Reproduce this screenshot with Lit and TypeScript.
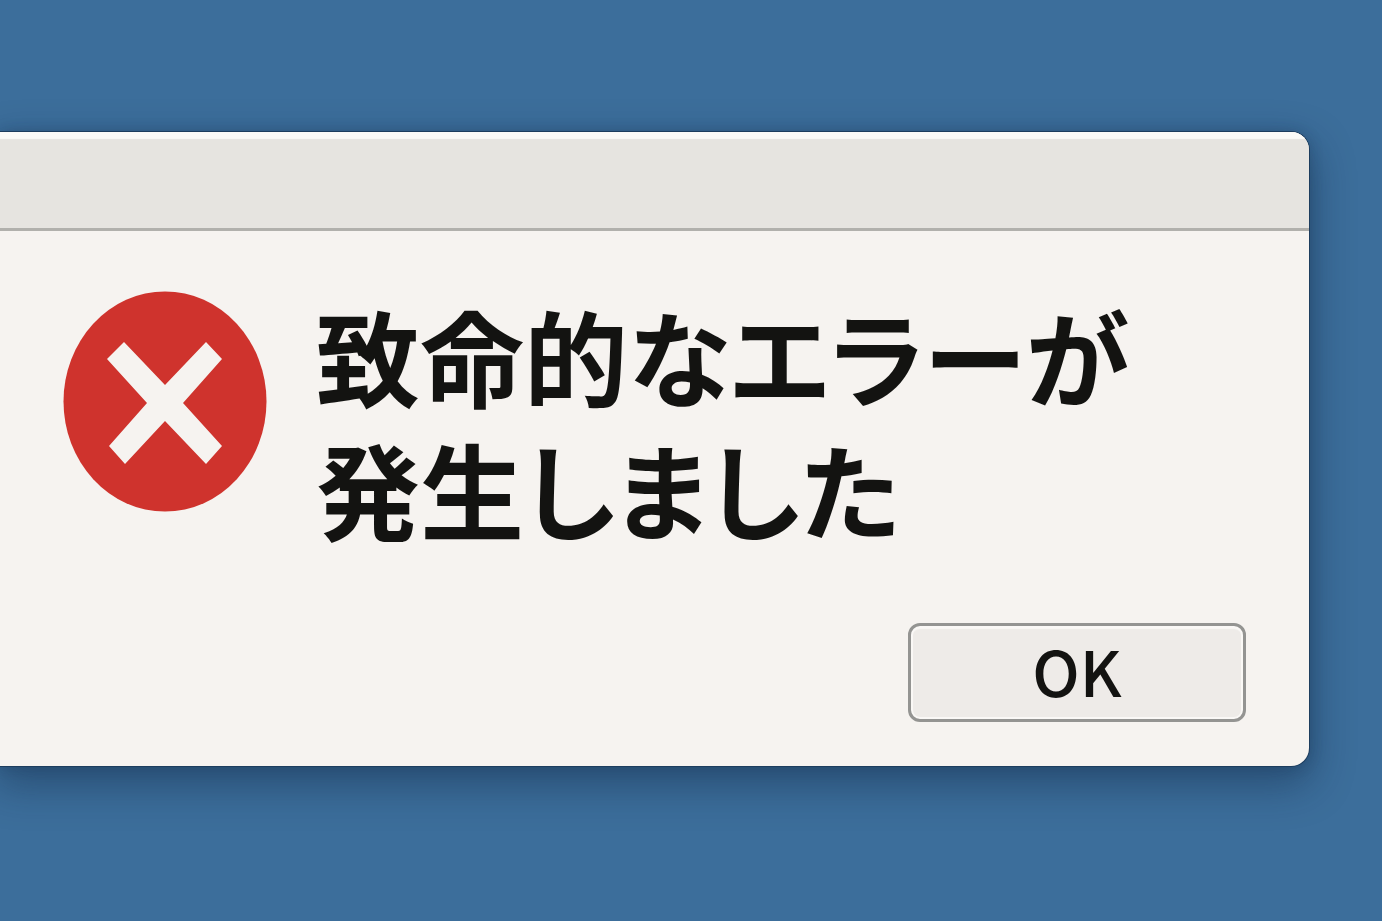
import { LitElement, html, css } from "lit";
import { customElement } from "lit/decorators.js";

@customElement("app-root")
export class AppRoot extends LitElement {
  static styles = css`
    :host {
      display: block;
      box-sizing: border-box;
      min-height: 100vh;
      padding: 132px 73px 154px 0;
      overflow: hidden;
      background: #3c6e9b;
      color: #131311;
      font-family: "Noto Sans CJK JP", "Noto Sans", sans-serif;
    }
    .dialog {
      box-sizing: border-box;
      display: flex;
      flex-direction: column;
      border-radius: 0 18px 18px 0;
      overflow: hidden;
      background: #f6f3f0;
      box-shadow:
        0 0 0 1px #1d3d5e,
        0 0 14px rgba(15, 35, 65, 0.25),
        0 16px 40px 4px rgba(15, 35, 65, 0.42);
    }
    .titlebar {
      height: 96px;
      border-bottom: 3px solid #b1b0ac;
      background: #e6e4e0;
      box-shadow: inset 0 8px 1px -1px #fbfaf8;
    }
    .content {
      display: flex;
      align-items: flex-start;
      gap: 49px;
      padding: 57px 64px 0 63px;
    }
    .icon {
      flex: none;
      width: 204px;
      height: 221px;
      margin-top: 3px;
    }
    .message {
      margin: 0;
      font-size: 104px;
      line-height: 133px;
      font-weight: 700;
      font-feature-settings: "palt";
      white-space: nowrap;
    }
    .actions {
      display: flex;
      justify-content: flex-end;
      padding: 69px 63px 44px;
    }
    .ok {
      box-sizing: border-box;
      width: 338px;
      height: 99px;
      padding: 0 0 6px;
      border: 3px solid #949492;
      border-radius: 12px;
      background: #eeebe8;
      box-shadow: inset 0 3px 1px #faf8f6, inset 0 0 0 2px #faf8f6;
      color: inherit;
      font: 500 63px/86px "Noto Sans CJK JP", sans-serif;
    }
  `;

  render() {
    return html`
      <section class="dialog" role="alertdialog" aria-labelledby="message">
        <header class="titlebar"></header>
        <div class="content">
          <svg class="icon" viewBox="0 0 204 221" aria-hidden="true">
            <ellipse cx="102" cy="110.500" rx="101.500" ry="110" fill="#cf332d" />
            <path
              d="M61 51 102 94 143 51 159 68 120 112 159 155 143 173 102 130 62 173 46 155 84 112 44 68Z"
              fill="#f6f3f0"
            />
          </svg>
          <h1 class="message" id="message">致命的なエラーが<br />発生しました</h1>
        </div>
        <div class="actions">
          <button class="ok" type="button">OK</button>
        </div>
      </section>
    `;
  }
}
